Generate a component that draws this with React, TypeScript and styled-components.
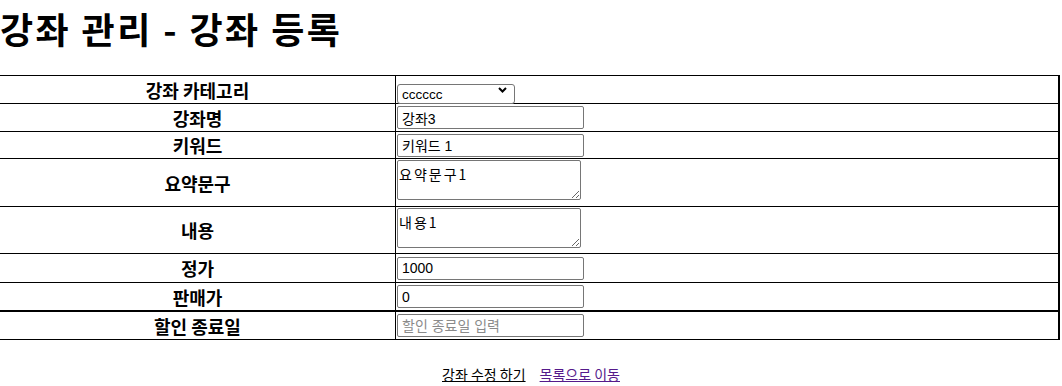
import { FC } from 'react'
import styled, { createGlobalStyle } from 'styled-components'

const GlobalStyle = createGlobalStyle`
  html, body {
    margin: 0;
    padding: 0;
    background: #fff;
    overflow: hidden;
  }
  body {
    font-family: 'Noto Sans CJK KR', 'Noto Sans', sans-serif;
    color: #000;
  }
`

const Page = styled.div`
  width: 1062px;
  height: 386px;
`

const Title = styled.h1`
  margin: 0 0 18px 0;
  height: 57px;
  line-height: 56px;
  font-size: 36px;
  letter-spacing: 2.4px;
  font-weight: 700;
  font-family: 'Noto Sans CJK KR', sans-serif;
  white-space: nowrap;
`

const FormTable = styled.div`
  width: 1061px;
  margin-left: -1px;
  box-sizing: border-box;
  border-top: 1px solid #000;
  border-left: 1px solid #000;
  border-right: 2px solid #000;
`

const Row = styled.div<{ $height: number; $thick?: boolean }>`
  display: grid;
  grid-template-columns: 396px 1fr;
  height: ${(p) => p.$height}px;
  border-bottom: ${(p) => (p.$thick ? 2 : 1)}px solid #000;
`

const Label = styled.div`
  display: flex;
  align-items: center;
  justify-content: center;
  border-right: 1px solid #000;
  font-size: 18px;
  font-weight: 700;
  font-family: 'Noto Sans CJK KR', sans-serif;
`

const Value = styled.div<{ $top?: boolean }>`
  display: flex;
  align-items: ${(p) => (p.$top ? 'flex-start' : 'center')};
  padding-left: 1px;
`

const SelectWrap = styled.div`
  position: relative;
  width: 118px;
  height: 20px;
`

const Select = styled.select`
  appearance: none;
  width: 118px;
  height: 20px;
  box-sizing: border-box;
  border: 1px solid #767676;
  border-radius: 3px;
  background: #fff;
  padding: 0 0 0 4px;
  font-size: 13.5px;
  font-family: 'Liberation Sans', Arial, sans-serif;
  color: #000;
`

const Chevron = styled.svg`
  position: absolute;
  right: 8px;
  top: 7px;
  pointer-events: none;
`

const TextInput = styled.input`
  width: 187px;
  height: 23px;
  box-sizing: border-box;
  border: 1px solid #767676;
  border-radius: 2px;
  padding: 1px 4px;
  font-size: 14px;
  font-family: 'Liberation Sans', 'Noto Sans CJK KR', sans-serif;
  color: #000;
  &::placeholder {
    color: #8a8a8a;
  }
`

const TextArea = styled.textarea`
  width: 184px;
  height: 40px;
  box-sizing: border-box;
  border: 1px solid #767676;
  border-radius: 2px;
  padding: 5px 1px 2px 1px;
  margin-top: 1px;
  font-size: 14px;
  line-height: 16px;
  letter-spacing: 2px;
  font-family: 'Noto Sans CJK KR', monospace;
  color: #000;
  resize: both;
`

const Footer = styled.div`
  display: flex;
  justify-content: center;
  gap: 14px;
  margin-top: 25px;
  font-size: 14px;
  line-height: 19px;
  font-family: 'Noto Sans CJK KR', sans-serif;
`

const Link = styled.a<{ $visited?: boolean }>`
  color: ${(p) => (p.$visited ? '#551a8b' : '#000')};
  text-decoration: underline;
  cursor: pointer;
`

const App: FC = () => {
  return (
    <Page>
      <GlobalStyle />
      <Title>강좌 관리 - 강좌 등록</Title>
      <FormTable>
        <Row $height={27}>
          <Label>강좌 카테고리</Label>
          <Value>
            <SelectWrap>
              <Select defaultValue="cccccc">
                <option value="cccccc">cccccc</option>
              </Select>
              <Chevron width="9" height="6" viewBox="0 0 9 6">
                <path d="M1 1 L4.5 4.5 L8 1" fill="none" stroke="#000" strokeWidth="2" />
              </Chevron>
            </SelectWrap>
          </Value>
        </Row>
        <Row $height={27}>
          <Label>강좌명</Label>
          <Value>
            <TextInput defaultValue="강좌3" />
          </Value>
        </Row>
        <Row $height={26}>
          <Label>키워드</Label>
          <Value>
            <TextInput defaultValue="키워드 1" />
          </Value>
        </Row>
        <Row $height={47}>
          <Label>요약문구</Label>
          <Value $top>
            <TextArea defaultValue="요약문구1" />
          </Value>
        </Row>
        <Row $height={46}>
          <Label>내용</Label>
          <Value $top>
            <TextArea defaultValue="내용1" />
          </Value>
        </Row>
        <Row $height={28}>
          <Label>정가</Label>
          <Value>
            <TextInput defaultValue="1000" />
          </Value>
        </Row>
        <Row $height={27} $thick>
          <Label>판매가</Label>
          <Value>
            <TextInput defaultValue="0" />
          </Value>
        </Row>
        <Row $height={27}>
          <Label>할인 종료일</Label>
          <Value>
            <TextInput placeholder="할인 종료일 입력" />
          </Value>
        </Row>
      </FormTable>
      <Footer>
        <Link>강좌 수정 하기</Link>
        <Link $visited>목록으로 이동</Link>
      </Footer>
    </Page>
  )
}

export default App
